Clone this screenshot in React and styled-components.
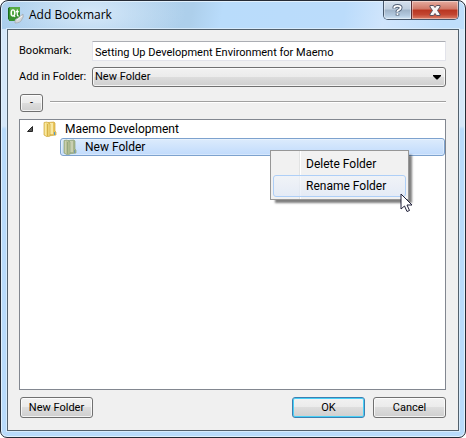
import React from "react";
import styled, { createGlobalStyle, css } from "styled-components";

const GlobalStyle = createGlobalStyle`
  *, *::before, *::after { box-sizing: border-box; }
  html { background: #fff; }
  body { margin: 0; color: #000; font: 12px/16px Roboto, "Liberation Sans", sans-serif; }
  button, input, select { font: inherit; color: inherit; margin: 0; }
`;

const Window = styled.section`
  display: flex;
  flex-direction: column;
  min-height: 100vh;
  padding: 0 6px 6px;
  border: 1px solid #252b36;
  border-radius: 8px 8px 7px 7px;
  overflow: hidden;
  background:
    radial-gradient(ellipse 95px 40px at 90px 12px, rgba(218, 235, 250, 0.9), rgba(218, 235, 250, 0) 100%),
    linear-gradient(100deg, #a9cdec 0, #adcfeb 190px, #b9dcfb 220px, #bbdcfb 340px, #d0e5fc 380px, #bfdefb 440px) 0 0 / 100% 28px no-repeat,
    linear-gradient(#d5e7f8 0, #d5e7f8 125px, #b9dbfb 128px, #b9dbfb 100%);
  box-shadow: inset 0 0 0 1px #e1f0fc;
`;

const TitleBar = styled.header`
  display: flex;
  align-items: center;
  gap: 5px;
  height: 28px;
`;

const Title = styled.h1`
  flex: 1;
  margin: 0;
  font-family: "Open Sans", "Noto Sans", sans-serif;
  font-size: 12px;
  font-weight: 400;
  line-height: 16px;
`;

const CaptionButtons = styled.div`
  display: flex;
  align-self: flex-start;
  height: 19px;
  border: 1px solid #46566a;
  border-top: 0;
  border-radius: 0 0 5px 5px;
  overflow: hidden;
`;

const CaptionButton = styled.button`
  display: grid;
  place-items: center;
  width: ${(p) => (p.$close ? 47 : 27)}px;
  padding: 0;
  border: 0;
  border-left: ${(p) => (p.$close ? "1px solid #5b2f35" : 0)};
  box-shadow: inset 0 0 0 1px rgba(255, 255, 255, 0.4);
  background: ${(p) =>
    p.$close
      ? "linear-gradient(#e5aca0 0, #d07766 45%, #b93520 50%, #c24631 75%, #dc8069 100%)"
      : "linear-gradient(#d5e1ee 0, #c0cfdf 45%, #9fb3c8 50%, #b3c9df 80%, #d2e4f5 100%)"};
`;

const Client = styled.main`
  display: flex;
  flex: 1;
  flex-direction: column;
  padding: 11px 12px 12px 11px;
  border: 1px solid #53616d;
  background: #f0f0f0;
  box-shadow: 0 0 0 1px rgba(222, 239, 253, 0.8);
`;

const Form = styled.form`
  display: grid;
  grid-template-columns: 66px 1fr;
  gap: 6px 7px;
  align-items: center;
`;

const Label = styled.label`
  font-size: 11px;
  white-space: nowrap;
`;

const TextField = styled.input`
  width: 100%;
  min-width: 0;
  height: 20px;
  padding: 2px 2px 0;
  border: 1px solid #e2e3ea;
  border-top-color: #abadb3;
  border-radius: 1px;
  outline: 0;
  background: #fff;
  font-size: 11px;
`;

const face = css`
  border: 1px solid #707070;
  border-radius: 3px;
  background: linear-gradient(#f2f2f2 0, #ebebeb 49%, #dddddd 50%, #cfcfcf 100%);
  box-shadow: inset 0 0 0 1px rgba(255, 255, 255, 0.75);
`;

const SelectWrap = styled.div`
  position: relative;
`;

const Select = styled.select`
  ${face}
  display: block;
  appearance: none;
  width: 100%;
  height: 20px;
  padding: 0 20px 0 2px;
  outline: 0;
  font-size: 11px;
`;

const SelectArrow = styled.svg`
  position: absolute;
  top: 8px;
  right: 5px;
  pointer-events: none;
`;

const Divider = styled.div`
  display: flex;
  align-items: center;
  gap: 7px;
  margin: 7px 0 7px 1px;
`;

const Rule = styled.hr`
  flex: 1;
  margin: 0 0 3px;
  border: 0;
  border-top: 1px solid #a0a0a0;
  border-bottom: 1px solid #fff;
`;

const PushButton = styled.button`
  ${face}
  width: ${(p) => (p.$small ? 23 : 73)}px;
  height: ${(p) => (p.$small ? 18 : 21)}px;
  padding: 0;
  font-size: 11px;
  line-height: 16px;
  white-space: nowrap;
  ${(p) =>
    p.$primary &&
    css`
      border-color: #3c7fb1;
      box-shadow: inset 0 0 0 1px #48d0f7;
    `}
`;

const TreeBox = styled.div`
  position: relative;
  flex: 1;
  border: 1px solid #828790;
  background: #fff;
`;

const Tree = styled.ul`
  margin: 0;
  padding: 0;
  list-style: none;
`;

const Item = styled.div`
  display: flex;
  align-items: center;
  height: 18px;
  white-space: nowrap;
  margin-left: ${(p) => (p.$selected ? 40 : 6)}px;
  ${(p) =>
    p.$selected &&
    css`
      border: 1px solid #7da2ce;
      border-radius: 3px;
      background: linear-gradient(#dcebfc, #c1dbfc);
      box-shadow: inset 0 0 0 1px rgba(255, 255, 255, 0.35);
    `}
`;

const FolderSlot = styled.span`
  display: flex;
  width: 22px;
  margin-left: ${(p) => (p.$root ? 9 : 2)}px;
`;

const Menu = styled.div`
  position: absolute;
  top: 30px;
  left: 250px;
  width: 139px;
  padding: 2px;
  border: 1px solid #979797;
  background: linear-gradient(90deg, #f1f1f1 28px, #e2e3e3 28px, #e2e3e3 29px, #fff 29px, #fff 30px, #f1f1f1 30px);
  box-shadow: 4px 4px 2px -1px rgba(0, 0, 0, 0.5);
`;

const MenuItem = styled.button`
  display: block;
  width: 100%;
  height: 22px;
  padding: 0 0 0 32px;
  border: 1px solid ${(p) => (p.$active ? "#aecff7" : "transparent")};
  border-radius: 3px;
  background: ${(p) => (p.$active ? "linear-gradient(rgba(240,244,250,.65), rgba(222,232,248,.65))" : "none")};
  text-align: left;
  white-space: nowrap;
`;

const Cursor = styled.svg`
  position: absolute;
  top: 42px;
  left: 129px;
  pointer-events: none;
`;

const Footer = styled.footer`
  display: flex;
  gap: 8px;
  margin: 7px 0 0 1px;
`;

const Spacer = styled.span`
  flex: 1;
`;

function AppIcon() {
  return (
    <svg width="17" height="18" viewBox="0 0 17 18" aria-hidden="true">
      <path d="M1 2 3 1v14l-2-2z" fill="#176b1c" />
      <path d="M2 1h11v14H2z" fill="#37912f" />
      <path d="M3 1h10v5L3 10z" fill="#56ab45" />
      <ellipse cx="6" cy="7" rx="1.8" ry="3.1" fill="none" stroke="#fff" strokeWidth="1.4" />
      <path d="m6.5 9 1.6 2M10.3 3.5V9q0 1.2 1.5.8M8.8 5.6h3" fill="none" stroke="#fff" strokeWidth="1.2" />
      <path d="M8 16q-1-3 3-4l5-4q1 3-1 5-1 4-7 4z" fill="#d4d7d9" stroke="#999fa4" strokeWidth=".6" />
      <path d="m10 14 5-4" stroke="#f8f8f8" />
    </svg>
  );
}

function FolderIcon({ selected }) {
  const c = selected
    ? ["#b9c096", "#8da37c", "#a8b58c", "#c9cfb1", "#7298ae"]
    : ["#f3dc80", "#cfa83d", "#e8c45a", "#f8e8a4", "#4b9bd8"];
  return (
    <svg width="14" height="16" viewBox="0 0 14 16" aria-hidden="true">
      <path d="M5 1.5 11 1l1 1v8l1 1v3l-8 1z" fill={c[2]} stroke={c[1]} strokeWidth=".7" />
      <path d="M7 2h3v11H7z" fill={c[3]} />
      <path d="M1 1.5 4 1l3 2v12l-3 .7L1 14z" fill={c[0]} stroke={c[1]} strokeWidth=".7" />
      <path d="M4.7 3v12" stroke={c[1]} />
      <path d="M2.5 2v12" stroke={c[3]} />
      <path d="M11.5 11v3" stroke={c[4]} />
    </svg>
  );
}

export default function App() {
  return (
    <>
      <GlobalStyle />
      <Window aria-label="Add Bookmark">
        <TitleBar>
          <AppIcon />
          <Title>Add Bookmark</Title>
          <CaptionButtons>
            <CaptionButton type="button" aria-label="Help">
              <svg width="11" height="13" viewBox="0 0 12 14" fill="none">
                <path d="M2.5 4.8V4q0-2 3.5-2t3.5 2q0 1.5-2 2.5T6 8.8M6 10.2v2.3" stroke="#536176" strokeWidth="4" />
                <path d="M2.5 4.6V4q0-2 3.5-2t3.5 2q0 1.5-2 2.5T6 8.5M6 10v2" stroke="#fff" strokeWidth="2" />
              </svg>
            </CaptionButton>
            <CaptionButton type="button" $close aria-label="Close">
              <svg width="12" height="11" viewBox="0 0 12 11">
                <path d="M1 .5h3.5L6 2.5 7.5.5H11V2L8.5 5.5 11 9v1.5H7.5L6 8.5l-1.5 2H1V9l2.5-3.5L1 2z" fill="#f8f6f6" stroke="#5a505c" />
              </svg>
            </CaptionButton>
          </CaptionButtons>
        </TitleBar>
        <Client>
          <Form onSubmit={(e) => e.preventDefault()}>
            <Label htmlFor="bookmark">Bookmark:</Label>
            <TextField id="bookmark" defaultValue="Setting Up Development Environment for Maemo" />
            <Label htmlFor="folder">Add in Folder:</Label>
            <SelectWrap>
              <Select id="folder" defaultValue="New Folder">
                <option>New Folder</option>
                <option>Maemo Development</option>
              </Select>
              <SelectArrow width="8" height="5" viewBox="0 0 8 5" aria-hidden="true">
                <path d="M0 0h8v1L4.5 4.5h-1L0 1z" />
              </SelectArrow>
            </SelectWrap>
          </Form>
          <Divider>
            <PushButton type="button" $small aria-label="Collapse folders">-</PushButton>
            <Rule />
          </Divider>
          <TreeBox>
            <Tree role="tree" aria-label="Bookmark folders">
              <li role="treeitem" aria-expanded="true">
                <Item>
                  <svg width="8" height="8" viewBox="0 0 8 8" aria-hidden="true">
                    <path d="M6.5 1.5v5h-5z" fill="#595959" stroke="#262626" />
                  </svg>
                  <FolderSlot $root><FolderIcon /></FolderSlot>
                  Maemo Development
                </Item>
                <Tree role="group">
                  <li role="treeitem" aria-selected="true">
                    <Item $selected>
                      <FolderSlot><FolderIcon selected /></FolderSlot>
                      New Folder
                    </Item>
                  </li>
                </Tree>
              </li>
            </Tree>
            <Menu role="menu">
              <MenuItem type="button" role="menuitem">Delete Folder</MenuItem>
              <MenuItem type="button" role="menuitem" $active>Rename Folder</MenuItem>
              <Cursor width="13" height="20" viewBox="0 0 13 20" aria-hidden="true">
                <path d="M1 1v15l3.5-3 2.5 5.5 2.5-1L7 12h5z" fill="#fff" stroke="#20203a" />
              </Cursor>
            </Menu>
          </TreeBox>
          <Footer>
            <PushButton type="button">New Folder</PushButton>
            <Spacer />
            <PushButton type="button" $primary>OK</PushButton>
            <PushButton type="button">Cancel</PushButton>
          </Footer>
        </Client>
      </Window>
    </>
  );
}
